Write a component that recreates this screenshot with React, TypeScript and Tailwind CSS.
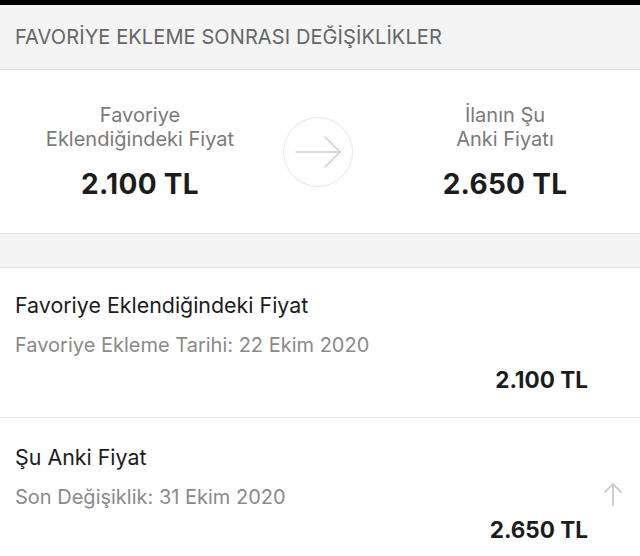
export default function App() {
  return (
    <div className="w-[640px] h-[556px] overflow-hidden bg-white font-['Inter',sans-serif]">
      <div className="h-[5px] bg-black" />
      <div className="h-[65px] bg-[#f4f4f4] border-b border-[#dcdcdc] flex items-center px-[15px]">
        <span className="text-[20px] text-[#666666] tracking-[0.1px]">FAVORİYE EKLEME SONRASI DEĞİŞİKLİKLER</span>
      </div>

      <div className="h-[163px] flex items-center">
        <div className="w-[280px] flex flex-col items-center text-center">
          <p className="text-[20px] leading-[24px] text-[#7a7a7a]">Favoriye<br />Eklendiğindeki Fiyat</p>
          <p className="mt-[17px] text-[28px] leading-[32px] font-bold text-[#1c1c1c] tracking-[0.3px]">2.100 TL</p>
        </div>
        <div className="ml-[3px] w-[70px] h-[70px] rounded-full border border-[#e6e6e6] flex items-center justify-center">
          <svg width="48" height="34" viewBox="0 0 48 34" fill="none" stroke="#d0d0d0" strokeWidth="1.6" strokeLinecap="round" strokeLinejoin="round">
            <path d="M2 17h44M31 2l15 15-15 15" />
          </svg>
        </div>
        <div className="ml-[17px] flex-1 flex flex-col items-center text-center">
          <p className="text-[20px] leading-[24px] text-[#7a7a7a]">İlanın Şu<br />Anki Fiyatı</p>
          <p className="mt-[17px] text-[28px] leading-[32px] font-bold text-[#1c1c1c] tracking-[0.3px]">2.650 TL</p>
        </div>
      </div>

      <div className="h-[35px] bg-[#f4f4f4] border-y border-[#e2e2e2]" />

      <div className="pl-[15px] pr-[17px] pt-[24px] pb-[24px] border-b border-[#e2e2e2]">
        <p className="text-[21.4px] leading-[26px] text-[#1c1c1c]">Favoriye Eklendiğindeki Fiyat</p>
        <p className="mt-[14px] text-[20px] leading-[26px] text-[#8a8a8a]">Favoriye Ekleme Tarihi: 22 Ekim 2020</p>
        <p className="mt-[9px] mr-[35px] text-right text-[22.5px] leading-[26px] font-bold text-[#1c1c1c]">2.100 TL</p>
      </div>

      <div className="pl-[15px] pr-[17px] pt-[26px]">
        <p className="text-[21.4px] leading-[26px] text-[#1c1c1c]">Şu Anki Fiyat</p>
        <div className="mt-[14px] flex items-center justify-between">
          <p className="text-[20px] leading-[26px] text-[#8a8a8a]">Son Değişiklik: 31 Ekim 2020</p>
          <svg width="20" height="24" viewBox="0 0 20 24" fill="none" stroke="#cfcfcf" strokeWidth="2" strokeLinecap="round" strokeLinejoin="round" className="-mt-[6px]">
            <path d="M10 23V2M2 10l8-8 8 8" />
          </svg>
        </div>
        <p className="mt-[7px] mr-[35px] text-right text-[22.5px] leading-[26px] font-bold text-[#1c1c1c]">2.650 TL</p>
      </div>
    </div>
  );
}
